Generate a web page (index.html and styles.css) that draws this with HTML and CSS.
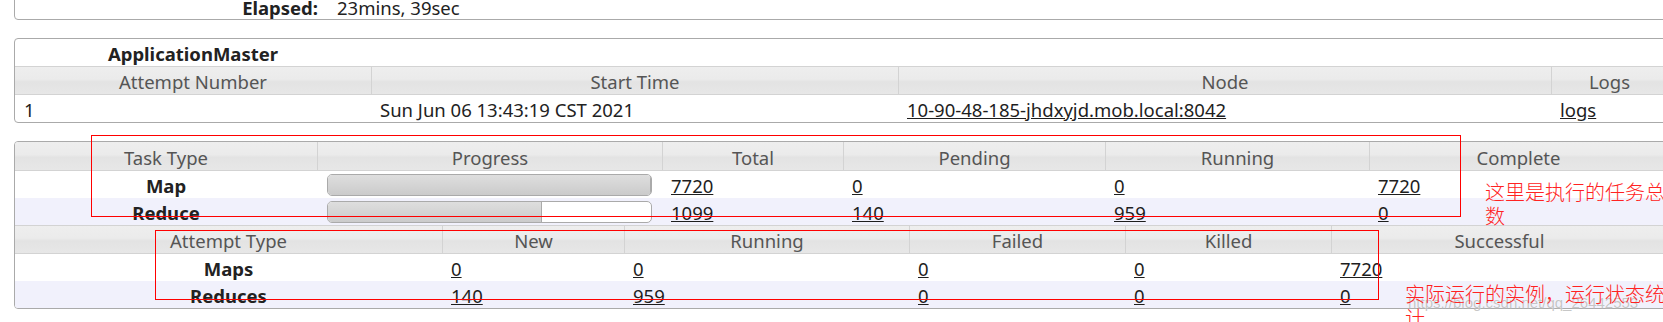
FILE: index.html
```html
<!doctype html>
<html>
<head>
	<title>MapReduce Job</title>
	<link rel="stylesheet" href="styles.css">
</head>
<body>
<div class="page">
	<div class="box info">
		<table class="info-table">
			<tr><th>Elapsed:</th><td>23mins, 39sec</td></tr>
		</table>
	</div>

	<div class="box">
		<table class="grid am">
			<colgroup><col><col><col><col></colgroup>
			<thead>
				<tr class="caption"><th>ApplicationMaster</th><th></th><th></th><th></th></tr>
				<tr class="head"><th>Attempt Number</th><th>Start Time</th><th>Node</th><th>Logs</th></tr>
			</thead>
			<tbody>
				<tr>
					<td>1</td>
					<td>Sun Jun 06 13:43:19 CST 2021</td>
					<td><a href="#">10-90-48-185-jhdxyjd.mob.local:8042</a></td>
					<td><a href="#">logs</a></td>
				</tr>
			</tbody>
		</table>
	</div>

	<div class="box">
		<table class="grid tasks">
			<colgroup><col><col><col><col><col><col></colgroup>
			<thead>
				<tr class="head top"><th>Task Type</th><th>Progress</th><th>Total</th><th>Pending</th><th>Running</th><th>Complete</th></tr>
			</thead>
			<tbody>
				<tr>
					<th class="label">Map</th>
					<td class="progress"><div class="bar"><div class="fill" style="width: 100%"></div></div></td>
					<td><a href="#">7720</a></td>
					<td><a href="#">0</a></td>
					<td><a href="#">0</a></td>
					<td><a href="#">7720</a></td>
				</tr>
				<tr class="even">
					<th class="label">Reduce</th>
					<td class="progress"><div class="bar"><div class="fill" style="width: 66.2%"></div></div></td>
					<td><a href="#">1099</a></td>
					<td><a href="#">140</a></td>
					<td><a href="#">959</a></td>
					<td><a href="#">0</a></td>
				</tr>
			</tbody>
		</table>
		<table class="grid attempts">
			<colgroup><col><col><col><col><col><col></colgroup>
			<thead>
				<tr class="head sub"><th>Attempt Type</th><th>New</th><th>Running</th><th>Failed</th><th>Killed</th><th>Successful</th></tr>
			</thead>
			<tbody>
				<tr>
					<th class="label">Maps</th>
					<td><a href="#">0</a></td>
					<td><a href="#">0</a></td>
					<td><a href="#">0</a></td>
					<td><a href="#">0</a></td>
					<td><a href="#">7720</a></td>
				</tr>
				<tr class="even">
					<th class="label">Reduces</th>
					<td><a href="#">140</a></td>
					<td><a href="#">959</a></td>
					<td><a href="#">0</a></td>
					<td><a href="#">0</a></td>
					<td><a href="#">0</a></td>
				</tr>
			</tbody>
		</table>
	</div>

	<div class="mark mark-tasks"></div>
	<div class="mark mark-attempts"></div>
	<p class="watermark">https://blog.csdn.net/qq_26442553</p>
	<p class="note note-tasks">这里是执行的任务总数</p>
	<p class="note note-attempts">实际运行的实例，运行状态统计</p>
</div>
</body>
</html>
```

FILE: styles.css
```css
html, body {
	margin: 0;
	overflow: hidden;
	background: #fff;
}

body {
	font-family: "Noto Sans", "Open Sans", sans-serif;
	font-size: 18.5px;
	color: #222;
}

.page {
	position: relative;
	display: flow-root;
	padding-left: 14px;
	width: 1654px;
}

.box {
	width: 1654px;
	box-sizing: border-box;
	border: 1px solid #aaa;
	border-radius: 4px;
	background: #fff;
	margin-bottom: 18px;
	overflow: hidden;
}

/* info block, scrolled mostly out of view */
.info {
	margin-top: -7px;
}

.info-table {
	border-spacing: 0;
}

.info-table th,
.info-table td {
	padding: 1px 0 0;
	line-height: 23px;
	height: 24px;
}

.info-table th {
	width: 303px;
	padding-right: 10px;
	text-align: right;
}

.info-table td {
	padding-left: 9px;
}

/* data tables */
.grid {
	width: 1652px;
	table-layout: fixed;
	border-spacing: 0;
}

.grid th,
.grid td {
	padding: 3px 9px 0;
	line-height: 24px;
	text-align: left;
	white-space: nowrap;
	overflow: hidden;
}

.grid .caption th {
	text-align: center;
	font-weight: bold;
}

.grid .head th {
	font-weight: normal;
	color: #555;
	text-align: center;
	background: linear-gradient(to bottom, #eeeeee 0%, #ebebeb 45%, #e3e3e3 55%, #e7e7e7 100%);
	border-top: 1px solid #d3d3d3;
	border-bottom: 1px solid #d3d3d3;
}

.grid .head.top th {
	border-top: 0;
	line-height: 25px;
}

.grid .head th + th {
	border-left: 1px solid #d3d3d3;
}

.grid .even {
	background: #f1f1fc;
}

.grid .label {
	font-weight: bold;
	text-align: center;
}

.grid a {
	color: #1e1e1e;
	text-decoration: underline;
}

.am col:nth-child(1) { width: 356px; }
.am col:nth-child(2) { width: 527px; }
.am col:nth-child(3) { width: 653px; }
.am col:nth-child(4) { width: 116px; }

.tasks col:nth-child(1) { width: 302px; }
.tasks col:nth-child(2) { width: 345px; }
.tasks col:nth-child(3) { width: 181px; }
.tasks col:nth-child(4) { width: 262px; }
.tasks col:nth-child(5) { width: 264px; }
.tasks col:nth-child(6) { width: 298px; }

.attempts col:nth-child(1) { width: 427px; }
.attempts col:nth-child(2) { width: 182px; }
.attempts col:nth-child(3) { width: 285px; }
.attempts col:nth-child(4) { width: 216px; }
.attempts col:nth-child(5) { width: 206px; }
.attempts col:nth-child(6) { width: 336px; }

.grid td.progress {
	padding: 0 10px;
	vertical-align: middle;
}

.bar {
	height: 22px;
	box-sizing: border-box;
	border: 1px solid #aaa;
	border-radius: 5px;
	background: #fff;
	overflow: hidden;
}

.fill {
	height: 100%;
	box-sizing: border-box;
	border-right: 1px solid #aaa;
	background: linear-gradient(to bottom, #dedede, #cbcbcb);
}

/* red annotations drawn over the screenshot */
.mark {
	position: absolute;
	box-sizing: border-box;
	border: 1px solid #f00;
}

.mark-tasks {
	left: 91px;
	top: 135px;
	width: 1370px;
	height: 82px;
}

.mark-attempts {
	left: 155px;
	top: 230px;
	width: 1224px;
	height: 70px;
}

.note {
	position: absolute;
	margin: 0;
	font-family: "Noto Sans CJK SC", sans-serif;
	font-size: 20px;
	font-weight: 300;
	line-height: 24px;
	color: #f22;
}

.note-tasks {
	left: 1485px;
	top: 180px;
	width: 182px;
}

.note-attempts {
	left: 1405px;
	top: 282px;
	width: 262px;
}

.watermark {
	position: absolute;
	left: 1408px;
	top: 294px;
	margin: 0;
	font-family: "Liberation Sans", sans-serif;
	font-size: 15px;
	line-height: 18px;
	color: rgba(150, 150, 150, 0.55);
	text-shadow: 0 0 1px #fff;
}
```
